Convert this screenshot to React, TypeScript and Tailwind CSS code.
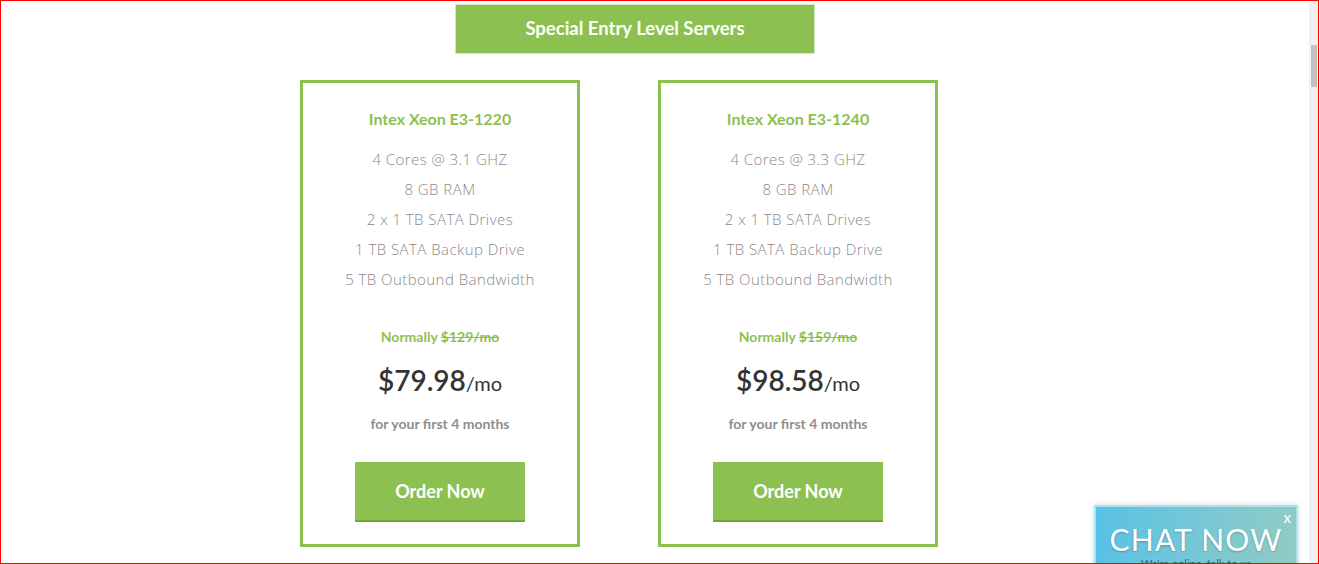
import React from 'react'

type Plan = {
  name: string
  specs: string[]
  normally: string
  price: string
}

const plans: Plan[] = [
  {
    name: 'Intex Xeon E3-1220',
    specs: ['4 Cores @ 3.1 GHZ', '8 GB RAM', '2 x 1 TB SATA Drives', '1 TB SATA Backup Drive', '5 TB Outbound Bandwidth'],
    normally: '$129/mo',
    price: '$79.98',
  },
  {
    name: 'Intex Xeon E3-1240',
    specs: ['4 Cores @ 3.3 GHZ', '8 GB RAM', '2 x 1 TB SATA Drives', '1 TB SATA Backup Drive', '5 TB Outbound Bandwidth'],
    normally: '$159/mo',
    price: '$98.58',
  },
]

const PlanCard: React.FC<{ plan: Plan }> = ({ plan }) => (
  <div className="w-[280px] h-[467px] border-[3px] border-[#8cc152] bg-white flex flex-col items-center text-center">
    <h3 className="mt-[24px] text-[16px] leading-[24px] font-bold text-[#8cc152]">{plan.name}</h3>
    <ul className="mt-[13px] font-['Open_Sans',sans-serif] font-light text-[15px] tracking-[0.03em] leading-[30px] text-[#8a8a8a]">
      {plan.specs.map(s => (
        <li key={s}>{s}</li>
      ))}
    </ul>
    <p className="mt-[33px] text-[14px] leading-[20px] font-bold text-[#8cc152]">
      Normally <span className="line-through">{plan.normally}</span>
    </p>
    <p className="mt-[15px] leading-[36px] text-[#333333]">
      <span className="text-[28px] font-semibold">{plan.price}</span>
      <span className="text-[20px]">/mo</span>
    </p>
    <p className="mt-[11px] text-[14px] leading-[20px] font-bold text-[#8e8e8e]">for your first 4 months</p>
    <button className="mt-[28px] w-[170px] h-[60px] bg-[#8cc152] border-b-2 border-[#72a63c] text-white text-[18px] font-bold">
      Order Now
    </button>
  </div>
)

export default function App() {
  return (
    <div className="relative h-[564px] w-full overflow-hidden border border-[#ff0000] bg-white flex font-['Lato',sans-serif]">
      <main className="flex-1 flex flex-col items-start">
        <div className="ml-[454px] mt-[3px] w-[360px] h-[50px] bg-[#8cc152] border border-[#d4e9c0] flex items-center justify-center">
          <span className="text-white text-[18.5px] font-bold">Special Entry Level Servers</span>
        </div>
        <div className="ml-[299px] mt-[26px] flex gap-[78px]">
          {plans.map(p => (
            <PlanCard key={p.name} plan={p} />
          ))}
        </div>
      </main>
      <div className="w-[9px] bg-[#f1f1f1] flex justify-center">
        <div className="mt-[44px] w-[6px] h-[42px] bg-[#c1c1c1]" />
      </div>

      <div className="absolute left-[1093px] top-[504px] w-[204px] h-[80px] border-2 border-[#a8e2f2] bg-gradient-to-r from-[#58c2e6] to-[#90cbc3] shadow-[0_0_6px_rgba(0,0,0,0.15)]">
        <span className="absolute right-[5px] top-[3px] text-white text-[15px] leading-none">x</span>
        <div className="pt-[14px] text-center text-white text-[30px] leading-[36px] tracking-[0.04em] [text-shadow:0_1px_2px_rgba(0,0,0,0.25)]">
          CHAT NOW
        </div>
        <div className="text-center text-[11px] text-[#2f6070] leading-[14px]">We're online, talk to us</div>
      </div>
    </div>
  )
}
